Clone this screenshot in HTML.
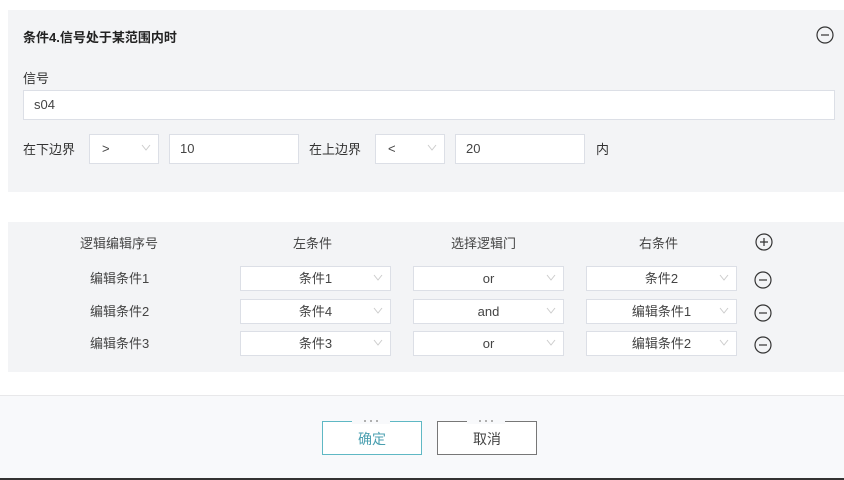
<!DOCTYPE html>
<html><head><meta charset="utf-8"><style>
*{box-sizing:border-box;margin:0;padding:0}
body{width:844px;height:480px;background:#fff;font-family:"Liberation Sans","Noto Sans CJK SC",sans-serif;font-size:13px;color:#333;position:relative;overflow:hidden}
.a{position:absolute}
.p{background:#f3f4f6}
.in{position:absolute;background:#fff;border:1px solid #dcdfe6;height:30px;line-height:28px;padding-left:10px;color:#444;font-size:13px}
.sel{position:absolute;background:#fff;border:1px solid #dcdfe6;height:25px;line-height:24px;text-align:center;font-size:13px;color:#444}
.chev{position:absolute;right:7px;top:50%;width:10px;height:7px;margin-top:-5px}
.ic{position:absolute;width:18px;height:18px}
</style></head><body>
<div class="a p" style="left:8px;top:10px;width:836px;height:182px"></div>
<div class="a" style="left:23px;top:27px;font-weight:bold;font-size:13px;color:#222">条件4.信号处于某范围内时</div>
<svg class="ic" style="left:816px;top:26px" viewBox="0 0 18 18"><circle cx="9" cy="9" r="8" fill="none" stroke="#333" stroke-width="1.2"/><path d="M5 9h8" stroke="#333" stroke-width="1.2"/></svg>
<div class="a" style="left:23px;top:68px">信号</div>
<div class="in" style="left:23px;top:90px;width:812px">s04</div>
<div class="a" style="left:23px;top:139px">在下边界</div>
<div class="in" style="left:89px;top:134px;width:70px;padding-left:12px">&gt;<svg class="chev" viewBox="0 0 10 7"><path d="M1 1l4 5 4-5" fill="none" stroke="#ccc"/></svg></div>
<div class="in" style="left:169px;top:134px;width:130px">10</div>
<div class="a" style="left:309px;top:139px">在上边界</div>
<div class="in" style="left:375px;top:134px;width:70px;padding-left:12px">&lt;<svg class="chev" viewBox="0 0 10 7"><path d="M1 1l4 5 4-5" fill="none" stroke="#ccc"/></svg></div>
<div class="in" style="left:455px;top:134px;width:130px">20</div>
<div class="a" style="left:596px;top:139px">内</div>

<div class="a p" style="left:8px;top:222px;width:836px;height:150px"></div>
<div class="a" style="left:80px;top:233px;color:#444">逻辑编辑序号</div>
<div class="a" style="left:293px;top:233px;color:#444">左条件</div>
<div class="a" style="left:451px;top:233px;color:#444">选择逻辑门</div>
<div class="a" style="left:639px;top:233px;color:#444">右条件</div>
<svg class="ic" style="left:755px;top:233px" viewBox="0 0 18 18"><circle cx="9" cy="9" r="8" fill="none" stroke="#333" stroke-width="1.2"/><path d="M5 9h8M9 5v8" stroke="#333" stroke-width="1.2"/></svg>

<div class="a" style="left:90px;top:268px;color:#444">编辑条件1</div>
<div class="a" style="left:90px;top:301px;color:#444">编辑条件2</div>
<div class="a" style="left:90px;top:333px;color:#444">编辑条件3</div>

<div class="sel" style="left:240px;top:266px;width:151px">条件1<svg class="chev" viewBox="0 0 10 7"><path d="M1 1l4 5 4-5" fill="none" stroke="#ccc"/></svg></div>
<div class="sel" style="left:413px;top:266px;width:151px">or<svg class="chev" viewBox="0 0 10 7"><path d="M1 1l4 5 4-5" fill="none" stroke="#ccc"/></svg></div>
<div class="sel" style="left:586px;top:266px;width:151px">条件2<svg class="chev" viewBox="0 0 10 7"><path d="M1 1l4 5 4-5" fill="none" stroke="#ccc"/></svg></div>
<div class="sel" style="left:240px;top:299px;width:151px">条件4<svg class="chev" viewBox="0 0 10 7"><path d="M1 1l4 5 4-5" fill="none" stroke="#ccc"/></svg></div>
<div class="sel" style="left:413px;top:299px;width:151px">and<svg class="chev" viewBox="0 0 10 7"><path d="M1 1l4 5 4-5" fill="none" stroke="#ccc"/></svg></div>
<div class="sel" style="left:586px;top:299px;width:151px">编辑条件1<svg class="chev" viewBox="0 0 10 7"><path d="M1 1l4 5 4-5" fill="none" stroke="#ccc"/></svg></div>
<div class="sel" style="left:240px;top:331px;width:151px">条件3<svg class="chev" viewBox="0 0 10 7"><path d="M1 1l4 5 4-5" fill="none" stroke="#ccc"/></svg></div>
<div class="sel" style="left:413px;top:331px;width:151px">or<svg class="chev" viewBox="0 0 10 7"><path d="M1 1l4 5 4-5" fill="none" stroke="#ccc"/></svg></div>
<div class="sel" style="left:586px;top:331px;width:151px">编辑条件2<svg class="chev" viewBox="0 0 10 7"><path d="M1 1l4 5 4-5" fill="none" stroke="#ccc"/></svg></div>

<svg class="ic" style="left:754px;top:271px" viewBox="0 0 18 18"><circle cx="9" cy="9" r="8" fill="none" stroke="#333" stroke-width="1.2"/><path d="M5 9h8" stroke="#333" stroke-width="1.2"/></svg>
<svg class="ic" style="left:754px;top:304px" viewBox="0 0 18 18"><circle cx="9" cy="9" r="8" fill="none" stroke="#333" stroke-width="1.2"/><path d="M5 9h8" stroke="#333" stroke-width="1.2"/></svg>
<svg class="ic" style="left:754px;top:336px" viewBox="0 0 18 18"><circle cx="9" cy="9" r="8" fill="none" stroke="#333" stroke-width="1.2"/><path d="M5 9h8" stroke="#333" stroke-width="1.2"/></svg>

<div class="a" style="left:0;top:395px;width:844px;height:83px;background:#f8f9fb;border-top:1px solid #e8e8ea"></div>
<div class="a" style="left:0;top:478px;width:844px;height:2px;background:#333"></div>
<div class="a" style="left:322px;top:421px;width:100px;height:34px;border:1px solid #5fb8c4;background:#fff;color:#4a9fb0;text-align:center;line-height:34px;font-size:14px">确定</div>
<div class="a" style="left:437px;top:421px;width:100px;height:34px;border:1px solid #777;background:#fff;color:#444;text-align:center;line-height:34px;font-size:14px">取消</div>
<div class="a" style="left:352px;top:416px;width:38px;height:8px;background:#f8f9fb"></div>
<div class="a" style="left:467px;top:416px;width:38px;height:8px;background:#f8f9fb"></div>
<svg class="a" style="left:362px;top:419px" width="18" height="4"><circle cx="3" cy="2" r="1" fill="#999"/><circle cx="9" cy="2" r="1" fill="#999"/><circle cx="15" cy="2" r="1" fill="#999"/></svg>
<svg class="a" style="left:477px;top:419px" width="18" height="4"><circle cx="3" cy="2" r="1" fill="#999"/><circle cx="9" cy="2" r="1" fill="#999"/><circle cx="15" cy="2" r="1" fill="#999"/></svg>
</body></html>
